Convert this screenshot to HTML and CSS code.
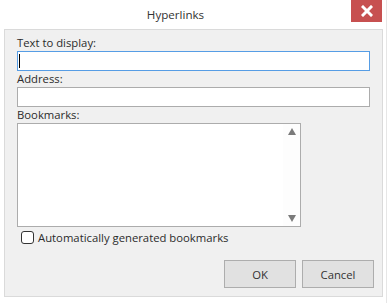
FILE: index.html
```html
<!DOCTYPE html>
<html>
<head>
    <link rel="stylesheet" href="styles.css">
</head>
<body>
<div class="window">
    <div class="titlebar">
        <div class="title">Hyperlinks</div>
        <div class="close">
            <svg width="12" height="12" viewBox="0 0 12 12">
                <path d="M2 2 L10 10 M10 2 L2 10" stroke="#fff" stroke-width="3" stroke-linecap="square"/>
            </svg>
        </div>
    </div>

    <div class="panel">
        <label class="label" for="text-display">Text to display:</label>
        <div class="input focused" id="text-display"><span class="caret"></span></div>

        <label class="label" for="address">Address:</label>
        <div class="input" id="address"></div>

        <label class="label">Bookmarks:</label>
        <div class="listbox">
            <div class="list-items"></div>
            <div class="scroll">
                <span class="arrow up"></span>
                <span class="arrow down"></span>
            </div>
        </div>

        <div class="check-row">
            <span class="checkbox"></span>
            <span>Automatically generated bookmarks</span>
        </div>

        <div class="buttons">
            <button type="button" class="btn">OK</button>
            <button type="button" class="btn">Cancel</button>
        </div>
    </div>
</div>
</body>
</html>
```

FILE: styles.css
```css
*{
    margin: 0;
    padding: 0;
    box-sizing: border-box;
}
body {
    width: 388px;
    height: 303px;
    font-family: "Open Sans", "Noto Sans", sans-serif;
    font-size: 11.3px;
    color: #2b2b2b;
    background-color: #fff;
    overflow: hidden;
}

.window {
    width: 387px;
    height: 303px;
    border-right: 1px solid #e6e6e6;
}

.titlebar {
    display: flex;
    height: 29px;
}

.title {
    flex: 1;
    text-align: center;
    line-height: 30px;
    font-size: 11.6px;
    color: #333;
}

.close {
    width: 31px;
    height: 22px;
    margin-right: 4px;
    background: #c75050;
    display: flex;
    align-items: center;
    justify-content: center;
}

.panel {
    margin-left: 4px;
    width: 379px;
    height: 268px;
    border: 1px solid #dadada;
    background: #f0f0f0;
    padding: 5px 8px 8px 12px;
}

.label {
    display: block;
    line-height: 16px;
    height: 16px;
}

.input {
    height: 20px;
    margin-right: 4px;
    background: #fff;
    border: 1px solid #acacac;
}

.input.focused {
    border-color: #569de5;
}

.caret {
    display: block;
    width: 1px;
    height: 14px;
    margin: 2px 0 0 1px;
    background: #000;
}

.listbox {
    display: flex;
    width: 284px;
    height: 104px;
    background: #fff;
    border: 1px solid #acacac;
}

.list-items {
    flex: 1;
}

.scroll {
    width: 17px;
    display: flex;
    flex-direction: column;
    justify-content: space-between;
    align-items: center;
    padding: 4px 0 4px;
    background: #fdfdfd;
}

.arrow {
    width: 0;
    height: 0;
    border-left: 4px solid transparent;
    border-right: 4px solid transparent;
}

.arrow.up {
    border-bottom: 7px solid #7a7a7a;
}

.arrow.down {
    border-top: 7px solid #7a7a7a;
}

.check-row {
    display: flex;
    align-items: center;
    gap: 4px;
    height: 16px;
    margin-top: 2px;
    padding-left: 4px;
}

.checkbox {
    width: 13px;
    height: 13px;
    background: #fff;
    border: 1px solid #333;
    border-radius: 3px;
}

.buttons {
    display: flex;
    justify-content: flex-end;
    gap: 6px;
    margin-top: 15px;
}

.btn {
    width: 72px;
    height: 28px;
    font-family: inherit;
    font-size: 11.3px;
    color: #333;
    background: #e1e1e1;
    border: 1px solid #adadad;
}
```
